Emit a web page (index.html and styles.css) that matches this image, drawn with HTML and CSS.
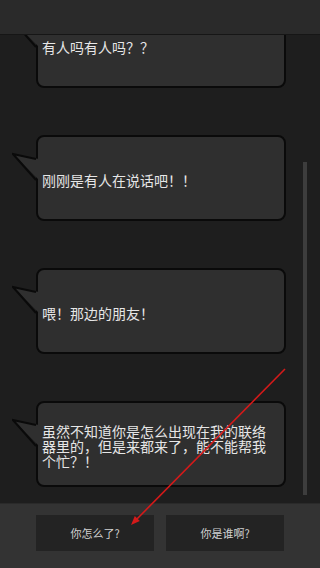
FILE: index.html
```html
<!DOCTYPE html>
<html lang="zh">
<head>
<meta charset="utf-8">
<link rel="stylesheet" href="styles.css">
</head>
<body>
<div class="app">
  <div class="header"></div>
  <div class="chat">
    <div class="list">
      <div class="bubble">
        <svg class="tail" width="27" height="30" viewBox="0 0 27 30"><polygon points="27,7 1,2 27,28" fill="#2f2f2f"/><polyline points="24,7 1,2 24,28" fill="none" stroke="#0a0a0a" stroke-width="2"/></svg>
        <p class="msg">有人吗有人吗？？</p>
      </div>
      <div class="bubble">
        <svg class="tail" width="27" height="30" viewBox="0 0 27 30"><polygon points="27,7 1,2 27,28" fill="#2f2f2f"/><polyline points="24,7 1,2 24,28" fill="none" stroke="#0a0a0a" stroke-width="2"/></svg>
        <p class="msg">刚刚是有人在说话吧！！</p>
      </div>
      <div class="bubble">
        <svg class="tail" width="27" height="30" viewBox="0 0 27 30"><polygon points="27,7 1,2 27,28" fill="#2f2f2f"/><polyline points="24,7 1,2 24,28" fill="none" stroke="#0a0a0a" stroke-width="2"/></svg>
        <p class="msg">喂！那边的朋友！</p>
      </div>
      <div class="bubble">
        <svg class="tail" width="27" height="30" viewBox="0 0 27 30"><polygon points="27,7 1,2 27,28" fill="#2f2f2f"/><polyline points="24,7 1,2 24,28" fill="none" stroke="#0a0a0a" stroke-width="2"/></svg>
        <p class="msg">虽然不知道你是怎么出现在我的联络器里的，但是来都来了，能不能帮我个忙？！</p>
      </div>
    </div>
    <div class="scrollbar"></div>
  </div>
  <div class="panel">
    <div class="btn">你怎么了?</div>
    <div class="btn">你是谁啊?</div>
  </div>
  <svg class="arrow" width="320" height="568" viewBox="0 0 320 568">
    <line x1="285" y1="369" x2="135" y2="521" stroke="#d41a1a" stroke-width="1.6"/>
    <polygon points="131,525 139.8,521.1 134.8,516.1" fill="#d41a1a"/>
  </svg>
</div>
</body>
</html>
```
FILE: styles.css
```css
* { box-sizing: border-box; }
html, body {
  margin: 0;
  padding: 0;
  background: #1e1e1e;
}
.app {
  position: relative;
  width: 320px;
  height: 568px;
  display: flex;
  flex-direction: column;
  overflow: hidden;
  font-family: "Noto Sans CJK SC", "Noto Sans", sans-serif;
}
.header {
  height: 35px;
  flex: none;
  background: #2a2a2a;
  border-bottom: 1px solid #161616;
  position: relative;
  z-index: 2;
}
.chat {
  position: relative;
  flex: 1;
  overflow: hidden;
  background: #1e1e1e;
}
.list {
  margin-top: -33px;
  display: flex;
  flex-direction: column;
  gap: 47px;
  padding-left: 36px;
}
.bubble {
  position: relative;
  width: 250px;
  height: 86px;
  background: #2f2f2f;
  border: 2px solid #0a0a0a;
  border-radius: 8px;
  display: flex;
  align-items: center;
  padding: 4px 12px 0 4px;
}
.tail {
  position: absolute;
  left: -26px;
  top: 15px;
  display: block;
}
.msg {
  margin: 0;
  font-size: 14px;
  line-height: 15px;
  color: #e6e6e6;
}
.scrollbar {
  position: absolute;
  left: 303px;
  top: 127px;
  width: 4px;
  height: 333px;
  background: #3d3d3d;
}
.panel {
  height: 65px;
  flex: none;
  background: #333333;
  border-top: 1px solid #2a2a2a;
  display: flex;
  gap: 12px;
  padding: 11px 0 0 36px;
}
.btn {
  width: 118px;
  height: 36px;
  background: #232323;
  color: #d2d2d2;
  font-size: 11px;
  display: flex;
  align-items: center;
  justify-content: center;
}
.arrow {
  position: absolute;
  left: 0;
  top: 0;
  pointer-events: none;
  z-index: 5;
}
```
